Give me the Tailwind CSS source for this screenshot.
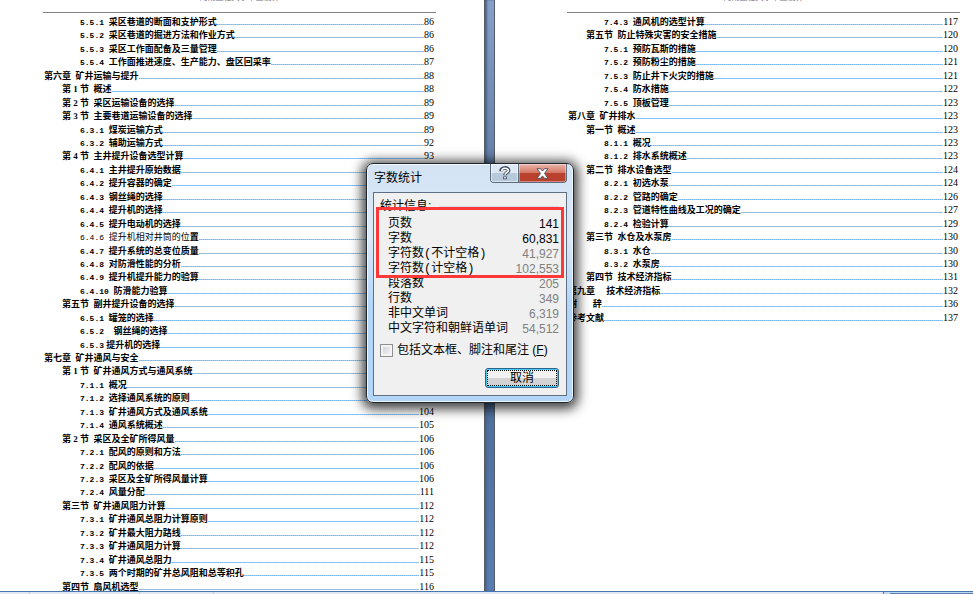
<!DOCTYPE html>
<html lang="zh-CN">
<head>
  <meta charset="UTF-8">
  <title>字数统计</title>
  <script src="https://cdn.jsdelivr.net/npm/@tailwindcss/browser@4"></script>
</head>
<body class="relative h-screen flex flex-col overflow-hidden bg-white text-black font-['Liberation_Serif','Noto_Sans_CJK_SC',serif]">

  <!-- Document pages -->
  <main class="flex-1 min-h-0 flex overflow-hidden">
    <section class="flex-1 min-w-0 flex flex-col pl-[43px] pr-12">
      <header class="shrink-0 h-[13px] border-b border-[#808080] flex items-end justify-center overflow-hidden">
        <p class="h-5 leading-3 text-[8px] text-gray-500">河南工程大学毕业设计</p>
      </header>
      <ol id="toc-left" class="flex-1 min-h-0 grid grid-rows-[repeat(43,minmax(0,1fr))] pt-0.5 pl-px pr-0.5 -mb-0.5"></ol>
    </section>

    <div class="w-[11px] shrink-0 border-x border-[#555c66] bg-linear-to-b from-[#86a0ca] via-[#4a688f] to-[#577db5] shadow-[inset_2px_0_2px_#4d6488]"></div>

    <section class="flex-1 min-w-0 flex flex-col pl-[72px] pr-[13px]">
      <header class="shrink-0 h-[13px] border-b border-[#808080] flex items-end justify-center overflow-hidden">
        <p class="h-5 leading-3 text-[8px] text-gray-500">河南工程大学毕业设计</p>
      </header>
      <ol id="toc-right" class="flex-1 min-h-0 grid grid-rows-[repeat(43,minmax(0,1fr))] pt-0.5 pl-px pr-0.5 -mb-0.5"></ol>
    </section>
  </main>

  <!-- Status bar edge -->
  <footer class="h-[3px] shrink-0 flex border-t border-[#4a76ae] bg-[#dfe8f4]">
    <div class="w-[30px] border-r border-[#b4c8e0]"></div>
    <div class="w-[110px] border-r border-[#b4c8e0]"></div>
    <div class="w-[74px] border-r border-[#b4c8e0]"></div>
    <div class="flex-1"></div>
    <div class="w-[90px] border-l border-[#4a76ae] bg-[#c3d8f0] pt-px pl-1.5"><div class="h-px bg-[#5580b8]"></div></div>
  </footer>

  <!-- Word count dialog -->
  <div role="dialog" aria-labelledby="dlg-title"
       class="absolute left-[366px] top-[163px] w-[208px] rounded-[7px] border border-[#20262e] bg-linear-to-b from-[#d3e3f4] from-0% via-[#dce9f7] via-30% to-[#b2d5f8] to-60% px-1.5 pb-1.5 shadow-[0_2px_12px_4px_rgba(0,0,0,0.75),inset_0_0_0_1px_#eef6ff] font-['Liberation_Sans','Noto_Sans_CJK_SC',sans-serif] text-xs">
    <div class="h-7 flex justify-between">
      <h1 id="dlg-title" class="pl-px pt-1.5 leading-4">字数统计</h1>
      <div class="flex h-[19px] rounded-b-[4px] border border-t-0 border-[#5d6b7c] overflow-hidden">
        <button type="button" aria-label="帮助" class="w-7 flex items-center justify-center border-r border-[#5d6b7c] bg-linear-to-b from-[#dde8f4] from-50% to-[#b9c9dc] to-50% shadow-[inset_0_0_0_1px_#ffffff80]">
          <svg class="w-3 h-3.5" viewBox="0 0 12 14" fill="none">
            <path d="M2 5.2C2 .9 9.6 1 9.6 4.5C9.6 6.7 6 6.3 6 9.2M6 10.4V13.2" stroke="#3f4858" stroke-width="3.6"/>
            <path d="M2.8 5C2.8 1.5 9.4 1.5 9.4 4.5C9.4 6.7 6 6.3 6 8.8M6 11V12.6" stroke="#fff" stroke-width="1.6"/>
          </svg>
        </button>
        <button type="button" aria-label="关闭" class="w-[47px] flex items-center justify-center bg-linear-to-b from-[#e9b5aa] from-0% via-[#d47464] via-50% to-[#b8402c] to-50% shadow-[inset_0_0_0_1px_#ffffff60]">
          <svg class="w-[13px] h-[11px]" viewBox="0 0 13 11">
            <path d="M1 .7H4.6L6.5 3L8.4 .7H12L8.5 5.4L12 10.3H8.4L6.5 7.9L4.6 10.3H1L4.5 5.4Z" fill="#fff" stroke="#515868"/>
          </svg>
        </button>
      </div>
    </div>

    <div class="border border-[#5f6f83] bg-[#f0f0f0] pl-1.5 pr-[7px] pt-1 pb-[7px]">
      <div class="flex items-center gap-2 h-[18px]">
        <h2 class="leading-4">统计信息:</h2>
        <div class="flex-1 h-px bg-[#d5dfe5]"></div>
      </div>
      <div class="relative pt-0.5">
        <table class="w-full">
          <tbody id="stats"></tbody>
        </table>
        <div class="absolute -left-1 -right-[5px] -top-2 h-[71px] border-[3px] border-[#fd3838] pointer-events-none"></div>
      </div>
      <label class="flex items-center gap-1 h-4 mt-[5px] whitespace-nowrap">
        <input type="checkbox" class="appearance-none size-[13px] shrink-0 border border-[#8e8f8f] bg-linear-to-br from-[#c9cfd5] to-[#f8f8f8] shadow-[inset_0_0_0_2px_#f4f4f4]">
        <span>包括文本框、脚注和尾注 (<u>F</u>)</span>
      </label>
      <div class="flex justify-end mt-2.5">
        <button type="button" class="w-[74px] h-5 rounded-[3px] border border-[#2c628b] bg-linear-to-b from-[#f2f2f2] from-50% to-[#d3d3d3] to-50% p-px shadow-[inset_0_0_0_1px_#48c8f4]">
          <span class="flex items-center justify-center h-full border border-dotted border-black leading-3">取消</span>
        </button>
      </div>
    </div>
  </div>

  <script>
    // [level, label, title, page, variant]
    const left = [
      [2, '5.5.1 ', '采区巷道的断面和支护形式', 86],
      [2, '5.5.2 ', '采区巷道的掘进方法和作业方式', 86],
      [2, '5.5.3 ', '采区工作面配备及三量管理', 86],
      [2, '5.5.4 ', '工作面推进速度、生产能力、盘区回采率', 87],
      [0, '第六章  ', '矿井运输与提升', 88],
      [1, '第 1 节  ', '概述', 88],
      [1, '第 2 节  ', '采区运输设备的选择', 89],
      [1, '第 3 节  ', '主要巷道运输设备的选择', 89],
      [2, '6.3.1 ', '煤炭运输方式', 89],
      [2, '6.3.2 ', '辅助运输方式', 92],
      [1, '第 4 节  ', '主井提升设备选型计算', 93],
      [2, '6.4.1 ', '主井提升原始数据', 93],
      [2, '6.4.2 ', '提升容器的确定', 93],
      [2, '6.4.3 ', '钢丝绳的选择', 94],
      [2, '6.4.4 ', '提升机的选择', 95],
      [2, '6.4.5 ', '提升电动机的选择', 95],
      [2, '6.4.6 ', '提升机相对井筒的位<b>置</b>', 96, 'plain'],
      [2, '6.4.7 ', '提升系统的总变位质量', 97],
      [2, '6.4.8 ', '对防滑性能的分析', 97],
      [2, '6.4.9 ', '提升机提升能力的验算', 98],
      [2, '6.4.10 ', '防滑能力验算', 99],
      [1, '第五节  ', '副井提升设备的选择', 100],
      [2, '6.5.1 ', '罐笼的选择', 100],
      [2, '6.5.2  ', '钢丝绳的选择', 100],
      [2, '6.5.3', ' 提升机的选择', 101],
      [0, '第七章  ', '矿井通风与安全', 102],
      [1, '第 1 节  ', '矿井通风方式与通风系统', 102],
      [2, '7.1.1 ', '概况', 102],
      [2, '7.1.2 ', '选择通风系统的原则', 103],
      [2, '7.1.3 ', '矿井通风方式及通风系统', 104],
      [2, '7.1.4 ', '通风系统概述', 105],
      [1, '第 2 节  ', '采区及全矿所得风量', 106],
      [2, '7.2.1 ', '配风的原则和方法', 106],
      [2, '7.2.2 ', '配风的依据', 106],
      [2, '7.2.3 ', '采区及全矿所得风量计算', 106],
      [2, '7.2.4 ', '风量分配', 111],
      [1, '第三节  ', '矿井通风阻力计算', 112],
      [2, '7.3.1 ', '矿井通风总阻力计算原则', 112],
      [2, '7.3.2 ', '矿井最大阻力路线', 112],
      [2, '7.3.3 ', '矿井通风阻力计算', 112],
      [2, '7.3.4 ', '矿井通风总阻力', 115],
      [2, '7.3.5 ', '两个时期的矿井总风阻和总等积孔', 115],
      [1, '第四节  ', '扇风机选型', 116],
    ];

    const right = [
      [2, '7.4.3 ', '通风机的选型计算', 117],
      [1, '第五节  ', '防止特殊灾害的安全措施', 120],
      [2, '7.5.1 ', '预防瓦斯的措施', 120],
      [2, '7.5.2 ', '预防粉尘的措施', 121],
      [2, '7.5.3 ', '防止井下火灾的措施', 121],
      [2, '7.5.4 ', '防水措施', 122],
      [2, '7.5.5 ', '顶板管理', 123],
      [0, '第八章  ', '矿井排水', 123],
      [1, '第一节  ', '概述', 123],
      [2, '8.1.1 ', '概况', 123],
      [2, '8.1.2 ', '排水系统概述', 123],
      [1, '第二节  ', '排水设备选型', 124],
      [2, '8.2.1 ', '初选水泵', 124],
      [2, '8.2.2 ', '管路的确定', 126],
      [2, '8.2.3 ', '管道特性曲线及工况的确定', 127],
      [2, '8.2.4 ', '检验计算', 129],
      [1, '第三节  ', '水仓及水泵房', 130],
      [2, '8.3.1 ', '水仓', 130],
      [2, '8.3.2 ', '水泵房', 130],
      [1, '第四节  ', '技术经济指标', 131],
      [0, '第九章     ', '技术经济指标', 132],
      [0, '谢       ', '辞', 136],
      [0, '参考文献', '', 137],
    ];

    const indent = ['pl-0', 'pl-[18px]', 'pl-9'];

    function renderToc(id, rows) {
      document.getElementById(id).innerHTML = rows.map(([level, label, title, page, variant]) => `
        <li class="min-h-0 ${indent[level]}">
          <a href="#" class="flex items-baseline whitespace-pre leading-[13px] text-[9px] ${variant === 'plain' ? 'font-normal' : 'font-bold'}"><span class="${level === 2 ? "font-['Liberation_Mono'] text-[8px]" : ''}">${label}</span><span>${title}</span><span class="flex-1 h-px bg-[repeating-linear-gradient(90deg,#7ab8f0_0_1px,#a3c9e8_1px_2px)]"></span><span class="font-normal text-[10px]">${page}</span></a>
        </li>`).join('');
    }

    renderToc('toc-left', left);
    renderToc('toc-right', right);

    const stats = [
      ['页数', '141', true],
      ['字数', '60,831', true],
      ['字符数(不计空格)', '41,927'],
      ['字符数(计空格)', '102,553'],
      ['段落数', '205'],
      ['行数', '349'],
      ['非中文单词', '6,319'],
      ['中文字符和朝鲜语单词', '54,512'],
    ];

    document.getElementById('stats').innerHTML = stats.map(([name, value, strong]) => `
      <tr class="h-[15px]">
        <th scope="row" class="p-0 pl-2 text-left font-normal leading-[15px] whitespace-nowrap font-['Liberation_Mono','Noto_Sans_CJK_SC',monospace]">${name}</th>
        <td class="p-0 text-right leading-[15px] ${strong ? 'text-black' : 'text-[#808080]'}">${value}</td>
      </tr>`).join('');
  </script>
</body>
</html>
